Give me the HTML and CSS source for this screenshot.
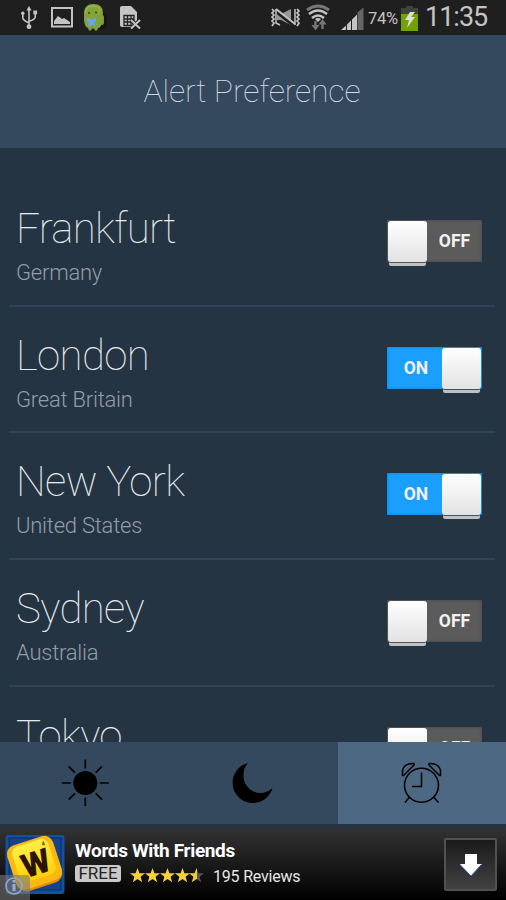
FILE: index.html
```html
<!DOCTYPE html>
<html lang="en">
<head>
<meta charset="utf-8">
<title>Alert Preference</title>
<link rel="stylesheet" href="styles.css">
</head>
<body>
<div class="screen">
  <div class="status">
    <svg class="status-icons" width="170" height="35" viewBox="0 0 170 35" fill="none" stroke="#c4c4c4">
      <g stroke-width="1.6"><path d="M29 8v18M22.8 14v3.5q0 3 6.2 5.2M35.3 13v3.5q0 3-6.3 4.8"/><path d="M26.4 10.5L29 6l2.6 4.5z" fill="#c4c4c4" stroke="none"/><circle cx="22.8" cy="13.3" r="1.7" fill="#c4c4c4" stroke="none"/><path d="M33.3 10.5h3.8v3.8h-3.8z" fill="#c4c4c4" stroke="none"/><circle cx="29" cy="26.7" r="2.4" fill="#c4c4c4" stroke="none"/></g>
      <rect x="52" y="8" width="20" height="18.5" stroke-width="2"/><path d="M54 24v-3l4-5 4 3 2-1 6 4v2z" fill="#c4c4c4" stroke="none"/>
      <g stroke="none"><ellipse cx="101" cy="21" rx="6" ry="9" fill="#151515"/><rect x="99" y="15" width="5" height="10" rx="2" fill="#7c9930"/><path d="M84 13q0-9 9.5-9t9.5 9l-1 9q-1 6-4 6l-1 2.500h-2l-1-2h-2l-1 2h-2l-1-2.500q-3-1-4-7z" fill="#83a238"/><path d="M85.5 13q0-7 7.500-7t7 6" stroke="#a6bd63" fill="none"/><path d="M87 17.500l5 2 4-2v3.500l-2 1.500 2 4-4-1.500-4 1.500 1-4-2-1.500z" fill="#68a5e8"/><circle cx="89" cy="13" r="1" fill="#33430f"/><circle cx="96" cy="12.500" r="1" fill="#33430f"/></g>
      <path d="M120 8q0-2 2-2h9l6 6v15h-15q-2 0-2-2z" fill="#c4c4c4" stroke="none"/>
      <path d="M124 15.500h10v10h-10zM127.500 15v11M131 15v11M124 19h10M124 22h10" stroke="#222" stroke-width="1.300"/>
      <path d="M131 20l9 9M140 20l-9 9" stroke="#1f1f1f" stroke-width="4"/><path d="M131 20l9 8.500M140 20l-9 8.500" stroke-width="2"/>
    </svg>
    <svg class="status-icons" width="106" height="35" viewBox="262 0 106 35" fill="none" stroke="#c4c4c4">
      <path d="M272 9l2 2-2 2 2 2-2 2 2 2-2 2 2 2-2 3M297 9l2 2-2 2 2 2-2 2 2 2-2 2 2 2-2 3" stroke-width="1.700"/>
      <path d="M277 14h4l10-5v16l-10-5h-4z" fill="#969696" stroke="none"/><path d="M276 11l19 15" stroke="#1f1f1f" stroke-width="4"/><path d="M276 9l19 15" stroke-width="2"/><path d="M276 9v14l4 2M295 9v16" stroke-width="1.500"/>
      <path d="M307 10q11-8 22 0" stroke="#777" stroke-width="3"/><path d="M309 14q9-7 18 0M312 18q6-5 12 0" stroke-width="2.500"/><path d="M315 19q3-2 6 0l-3 3z" fill="#c4c4c4" stroke="none"/>
      <path d="M315.500 21v5M322.500 29v-6" stroke="#777" stroke-width="2.400"/><path d="M311.500 25h8l-4 5.500zM318.500 24.500h8l-4-5.500z" fill="#777" stroke="none"/>
      <g stroke="none"><path d="M357.500 12.500l6-5V30h-6z" fill="#666"/><path d="M341 30l5-4.500V30zM347 24.500l4-4V30h-4zM352 19.500l5-5V30h-5z" fill="#c4c4c4"/></g>
    </svg>
    <span class="percent">74%</span>
    <svg class="battery" width="17" height="25" viewBox="0 0 17 25"><path d="M5 0h7v2h5v23H0V2h5z" fill="#414141"/><path d="M0 8h17v17H0z" fill="#72a302"/><path d="M9 6l-5 8h4l-2 8 8-11h-4l4-5z" fill="#ddd"/></svg>
    <span class="clock">11:35</span>
  </div>
  <header class="header">Alert Preference</header>
  <main class="list">
    <div class="row"><div class="place"><div class="city frankfurt">Frankfurt</div><div class="country">Germany</div></div><div class="toggle"><span class="knob"></span><span class="state">OFF</span></div></div>
    <div class="row"><div class="place"><div class="city">London</div><div class="country">Great Britain</div></div><div class="toggle on"><span class="state">ON</span><span class="knob"></span></div></div>
    <div class="row"><div class="place"><div class="city">New York</div><div class="country">United States</div></div><div class="toggle on"><span class="state">ON</span><span class="knob"></span></div></div>
    <div class="row"><div class="place"><div class="city">Sydney</div><div class="country">Australia</div></div><div class="toggle"><span class="knob"></span><span class="state">OFF</span></div></div>
    <div class="row"><div class="place"><div class="city">Tokyo</div></div><div class="toggle"><span class="knob"></span><span class="state">OFF</span></div></div>
  </main>
  <nav class="tabs">
    <div class="tab"><svg width="50" height="50" viewBox="-25.300 -27 50 50"><circle r="12"/><path d="M0-23.500v9M0 14.500v9M-23.500 0h9M14.500 0h9M-16.700-16.700l6.300 6.300M10.400 10.400l6.300 6.300M-16.700 16.700l6.300-6.300M10.400-10.400l6.300-6.300" stroke="#000" stroke-width="1.700"/></svg></div>
    <div class="tab"><svg class="moon" width="42" height="42" viewBox="0 0 42 42"><path d="M16 1A20.300 20.300 0 1 0 40.500 26A17 17 0 0 1 11.500 13Q11.500 6 16 1z"/></svg></div>
    <div class="tab active"><svg width="42" height="42" viewBox="0 0 42 42" fill="none" stroke="#000" stroke-width="1.500"><circle cx="20.500" cy="23.300" r="17"/><path d="M20.500 10.500v14H11M8.500 35L4 40.500M32.500 35l5 5.500M1.500 13.500V8.500Q3 1 13 1.500v1.500L2.500 13.500zM39.500 13.500V8.500Q38 1 28 1.500v1.500l10.500 10.500z"/></svg></div>
  </nav>
  <aside class="ad">
    <div class="app">
      <svg width="65" height="72" viewBox="0 0 65 72">
        <defs><linearGradient id="tile" x1="0" y1="0" x2="0" y2="1"><stop offset="0" stop-color="#ffef48"/><stop offset="1" stop-color="#ffd000"/></linearGradient></defs>
        <rect x="5.500" y="7" width="59" height="59" rx="3" fill="#174f9f"/><rect x="9" y="10" width="52" height="52" fill="#16438c" stroke="#0c2d62"/>
        <rect x="12" y="14" width="47" height="46" rx="10" fill="#e58d00" transform="rotate(-18 35 37)"/><rect x="10.500" y="12" width="48" height="46" rx="9" fill="#fbb813" transform="rotate(-18 34 35)"/>
        <rect x="15" y="14" width="38" height="37" rx="7" fill="url(#tile)" transform="rotate(-18 34 33)"/>
        <text x="36" y="47" class="tile-letter" transform="rotate(-18 35 36)">W</text><text x="42" y="18" class="tile-score" transform="rotate(-15 42 18)">4</text>
        <path d="M0 47h26q4 0 4 4v21H0z" fill="#777" opacity=".62"/><circle cx="14" cy="58" r="8" fill="none" stroke="#9aabc4" stroke-width="1.500"/><path d="M14 56v7M14 52v2.500" stroke="#9aabc4" stroke-width="3"/>
      </svg>
    </div>
    <div class="ad-copy">
      <div class="ad-title">Words With Friends</div>
      <div class="ad-meta"><span class="free">FREE</span>
        <svg class="stars" width="74" height="15" viewBox="0 0 74 15"><defs><linearGradient id="half"><stop offset=".53" stop-color="#f5cb35"/><stop offset=".53" stop-color="#555"/></linearGradient><path id="star" d="M7.500 0l1.900 5.300H15l-4.400 3.500 1.600 5.400-4.700-3.200-4.700 3.200 1.600-5.400L0 5.300h5.600z"/></defs><g fill="#f8d13d"><use href="#star"/><use href="#star" x="15"/><use href="#star" x="30"/><use href="#star" x="45"/></g><use href="#star" x="59" fill="url(#half)"/></svg>
        <span class="reviews">195 Reviews</span></div>
    </div>
    <div class="download"><svg width="24" height="24" viewBox="0 0 24 24"><path d="M6 1h12v10h5L12 23 1 11h5z" fill="#fff"/><path d="M22 12L12 23 1 12" fill="none" stroke="#315fc5"/></svg></div>
  </aside>
</div>
</body>
</html>
```
FILE: styles.css
```css
* { box-sizing: border-box; }
body { margin: 0; background: #253443; font-family: Roboto, sans-serif; }
.screen { width: 506px; height: 900px; display: flex; flex-direction: column; overflow: hidden; }
.status { height: 35px; flex: none; display: flex; background: #1f1f1f; color: #c4c4c4; }
.status svg { flex: none; }
.status-icons + .status-icons { margin-left: 92px; }
.percent { width: 33px; padding-top: 9px; font-size: 16.5px; line-height: 19px; letter-spacing: -.3px; white-space: nowrap; }
.battery { margin: 6px 0 0; }
.clock { margin-left: 7px; font-size: 27px; line-height: 35px; letter-spacing: -1px; white-space: nowrap; }
.header { height: 113px; flex: none; background: #34495e; color: #d4dae0; text-align: center; font-size: 32px; font-weight: 100; line-height: 112px; letter-spacing: -.14px; padding-right: 2px; }
.list { flex: 1; min-height: 0; padding: 31px 11px 0 9px; overflow: hidden; }
.row { position: relative; height: 126.67px; display: flex; justify-content: space-between; padding: 25px 13px 0 7px; }
.row::after { content: ""; position: absolute; left: 0; right: 0; bottom: -1px; height: 2px; background: #2f4359; }
.city { color: #e8ecef; font-size: 42px; font-weight: 100; line-height: 50px; letter-spacing: -.62px; white-space: nowrap; }
.frankfurt { letter-spacing: -.72px; }
.country { margin-top: 6px; color: #939da7; font-size: 22px; font-weight: 300; line-height: 26px; letter-spacing: -.23px; white-space: nowrap; }
.toggle { width: 95px; height: 42px; margin-top: 16px; display: flex; background: #5b5b5b; box-shadow: inset 0 0 3px #414141; }
.toggle.on { background: #1a9fff; box-shadow: inset 0 0 3px #0879c6; }
.knob { width: 39px; height: 41px; margin: 1px 0 0 1px; border-radius: 3px; background: linear-gradient(#fff, #e2e2e2); box-shadow: 0 1px 0 #555, 0 5px 0 -1px #bfc0bf; }
.on .knob { margin: 1px 1px 0 0; box-shadow: 0 1px 0 #175e92, 0 5px 0 -1px #bfc0bf; }
.state { flex: 1; color: #f1f1f1; text-align: center; font-size: 17.5px; font-weight: 700; line-height: 42px; }
.on .state { padding-left: 3px; }
.tabs { height: 82px; flex: none; display: grid; grid-template-columns: 168px 170px 168px; background: #34495e; }
.tab { display: flex; justify-content: center; align-items: center; }
.tab:first-child svg { margin: -4px 0 0; }
.active { background: #4d6882; }
.ad { height: 76px; flex: none; display: flex; border-top: 4px solid #253443; background: linear-gradient(#333, #000) padding-box; color: #fff; }
.app { width: 65px; height: 72px; }
.ad-copy { width: 370px; padding: 12px 0 0 10px; }
.ad-title { font-size: 19px; font-weight: 700; line-height: 22px; letter-spacing: -.34px; }
.ad-meta { display: flex; align-items: center; height: 25px; font-size: 16px; }
.free { width: 46px; height: 17px; border-radius: 3px; background: #c9c9c9; color: #222; text-align: center; font-size: 17px; line-height: 17px; margin-top: -2px; }
.stars { margin: 1px 9px 0 9px; }
.reviews { margin-top: 3px; color: #e5e5e5; letter-spacing: -.2px; }
.download { width: 53px; height: 53px; margin: 10px 0 0 9px; border: 2px solid #515151; border-radius: 2px; background: linear-gradient(#1b1b1b, #414141); display: flex; align-items: center; justify-content: center; }
.tile-letter { fill: #2b1500; font: 900 33px Roboto, sans-serif; text-anchor: middle; }
.tile-score { fill: #6c4b00; font: 700 6px Roboto, sans-serif; }
.tab:first-child svg { position: relative; left: 1px; }
```
